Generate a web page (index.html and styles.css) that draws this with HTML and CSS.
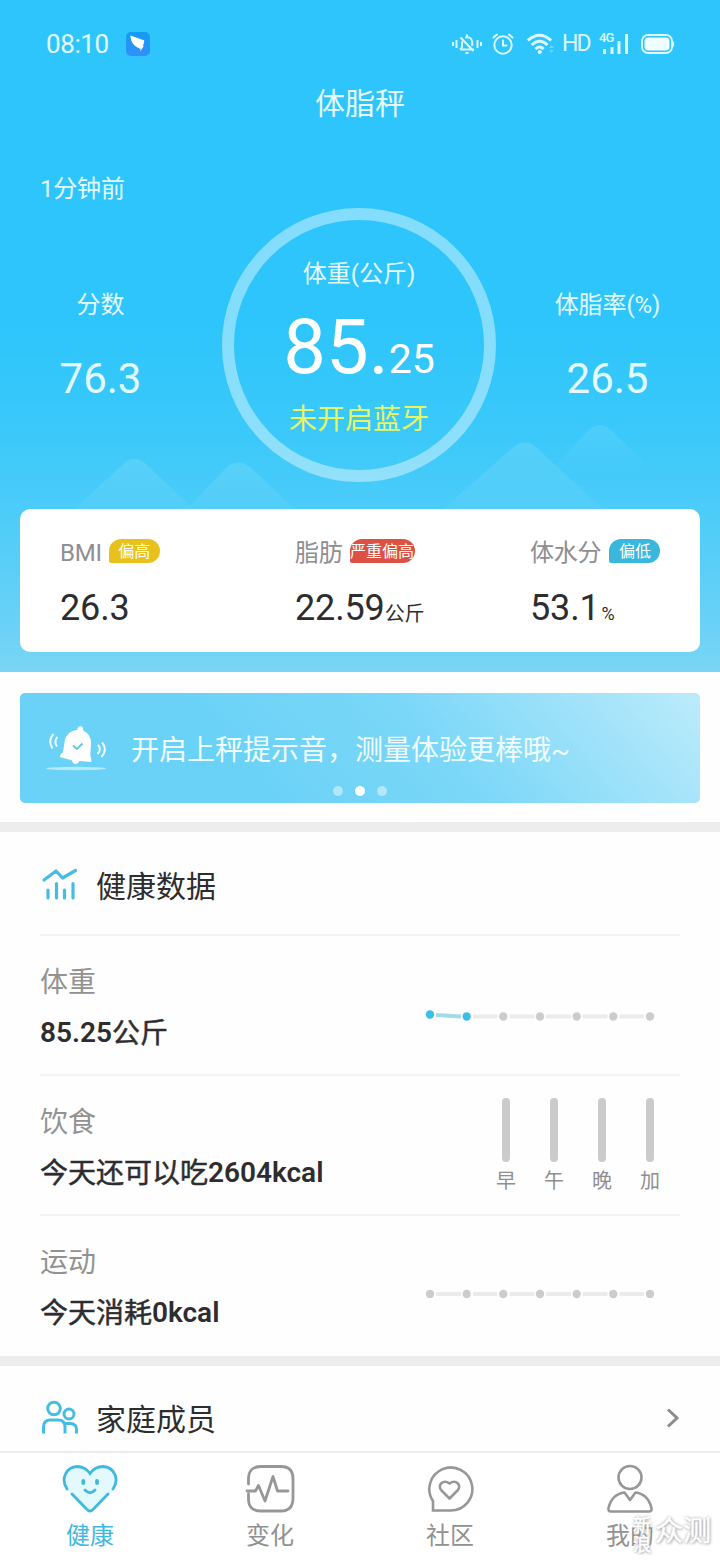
FILE: index.html
```html
<!DOCTYPE html>
<html lang="zh-CN">
<head>
<meta charset="utf-8">
<title>体脂秤</title>
<link rel="stylesheet" href="styles.css">
</head>
<body>
<div class="screen">
  <section class="hero">
    <svg class="hills" width="720" height="110" viewBox="0 0 720 110">
      <defs>
        <linearGradient id="hill" x1="0" y1="0" x2="0" y2="1">
          <stop offset="0" stop-color="#fff" stop-opacity=".12"/>
          <stop offset="1" stop-color="#fff" stop-opacity=".03"/>
        </linearGradient>
        <linearGradient id="hill-far" x1="0" y1="0" x2="0" y2="1">
          <stop offset="0" stop-color="#fff" stop-opacity=".1"/>
          <stop offset="1" stop-color="#fff" stop-opacity="0"/>
        </linearGradient>
      </defs>
      <path fill="url(#hill)" d="M72 92 L123 44 Q134 34 146 44 L190 86 L184 92Z"/>
      <path fill="url(#hill)" d="M184 92 L227 47 Q238 38 250 47 L298 92Z"/>
      <path fill="url(#hill)" d="M440 92 L509 31 Q523 15 537 28 L606 92Z"/>
      <path fill="url(#hill-far)" d="M556 45 L588 11 Q600 -1 612 11 L640 38 Q646 46 638 54 L566 54Z"/>
    </svg>
    <header class="status">
      <span class="clock">08:10</span>
      <svg class="app-badge" width="24" height="24" viewBox="0 0 24 24">
        <defs><linearGradient id="ding" x1="0" y1="0" x2="0" y2="1"><stop offset="0" stop-color="#149cf3"/><stop offset="1" stop-color="#338efb"/></linearGradient></defs>
        <rect width="24" height="24" rx="5" fill="url(#ding)"/>
        <path fill="#fff" d="M4.300 3.500 L18 8.300 Q18.600 9 18 10.500 L17 14 H17.700 L14 19.700 L14.600 17 L11.500 15.500 L8.500 13.500 L6.500 11 L5.200 8.500Z"/>
      </svg>
      <div class="indicators">
        <svg class="i-mute" width="30" height="22" viewBox="0 0 30 22" fill="none" stroke="#dcfaff" stroke-width="2">
          <path d="M1 9v4M4.500 7v8M25.500 7v8M29 9v4M8 16.500h14M8 16.500 L10 14V8.500M13 4.500 Q20 3 20.200 9.500 V13M15 1.500v2M13.500 20h3M8.500 4.500 L21.500 18"/>
        </svg>
        <svg class="i-alarm" width="22" height="22" viewBox="0 0 22 22" fill="none" stroke="#dcfaff" stroke-width="2" stroke-linecap="round">
          <circle cx="11" cy="12" r="8.700"/><path d="M11 7.500v5h3.500M1.500 4.500 L5 1.500M20.500 4.500 L17 1.500"/>
        </svg>
        <svg class="i-wifi" width="28" height="22" viewBox="0 0 28 22" fill="none" stroke="#dcfaff" stroke-width="2.900">
          <path d="M.8 7.500 Q12.500 -3 24.200 7.500M4.700 12 Q12.500 4.500 20.500 12M8.500 16 Q12.500 12 16.700 16"/>
          <circle cx="12.700" cy="19" r="2.100" fill="#dcfaff" stroke="none"/>
          <path stroke="none" fill="#65d8f4" d="M22 15l2.500-3 2.500 3zM22 17l2.500 3 2.500-3z"/>
        </svg>
        <span class="hd">HD</span>
        <span class="signal">
          <svg width="30" height="22" viewBox="0 0 30 22" fill="#dcfaff"><path d="M4 16h3v5H4zM11.500 14h3v7h-3zM18.500 8h3v13h-3zM26 1h3v20h-3z"/></svg>
          <span class="net">4G</span>
        </span>
        <svg class="i-battery" width="34" height="20" viewBox="0 0 34 20">
          <rect x="1" y="1" width="30" height="18" rx="6" fill="none" stroke="#dcfaff" stroke-width="1.800"/>
          <rect x="3.500" y="3.500" width="25" height="13" rx="4" fill="#f0feff"/>
          <path d="M31 5.500 Q35.500 10 31 14.500Z" fill="#dcfaff"/>
        </svg>
      </div>
    </header>
    <h1 class="title">体脂秤</h1>
    <p class="updated">1分钟前</p>
    <div class="overview">
      <div class="side side-left"><span class="side-label">分数</span><span class="side-value">76.3</span></div>
      <div class="ring">
        <span class="ring-label">体重(公斤)</span>
        <span class="ring-value">85.<small>25</small></span>
        <span class="ring-state">未开启蓝牙</span>
      </div>
      <div class="side side-right"><span class="side-label">体脂率(%)</span><span class="side-value">26.5</span></div>
    </div>
    <div class="metrics">
      <div class="metric"><div class="metric-head">BMI<span class="tag tag-high">偏高</span></div><div class="metric-value">26.3</div></div>
      <div class="metric"><div class="metric-head">脂肪<span class="tag tag-severe">严重偏高</span></div><div class="metric-value">22.59<small>公斤</small></div></div>
      <div class="metric"><div class="metric-head">体水分<span class="tag tag-low">偏低</span></div><div class="metric-value">53.1<small class="pct">%</small></div></div>
    </div>
  </section>

  <section class="banner">
    <svg class="bell" width="62" height="48" viewBox="0 0 62 48">
      <ellipse cx="30" cy="44.500" rx="30" ry="1.700" fill="#b5e9fc"/>
      <path fill="#fff" d="M31.300 6 Q31.500 2 34.500 2.200 Q37.600 2.400 37.300 6.800 Q45 10 45 19 L44.300 32 Q45.800 34.500 45.200 38 L33.500 37 Q32 40.300 29 39.900 Q26.200 39.500 26.300 36.500 L14 33 Q14 30 17 28.500 L18.700 17 Q20.500 7 31.300 6Z"/>
      <path d="M27 21.500 L31 25 L36.500 19.500" fill="none" stroke="#6fc5d8" stroke-width="2"/>
      <path d="M7.500 10 Q1.500 16.500 6.500 24.500M11.500 13 Q7.500 17.500 11 22.500M56 18.500 Q62 25 55.500 33M52 21 Q56 25.500 51.500 30" fill="none" stroke="#f1fdff" stroke-width="1.900"/>
    </svg>
    <p class="banner-text">开启上秤提示音，测量体验更棒哦~</p>
    <div class="dots"><i></i><i class="on"></i><i></i></div>
  </section>

  <section class="health">
    <h2 class="heading">
      <svg width="38" height="34" viewBox="0 0 38 34" fill="none" stroke="#45bde2" stroke-width="3.200" stroke-linecap="round" stroke-linejoin="round">
        <path d="M4 12 L16 3 L22.500 10 L35.500 2.500M8 22v8M16.500 15.500V30M24.500 22v8M33 15.500V30"/>
      </svg>健康数据</h2>
    <article class="row">
      <div><p class="row-label">体重</p><p class="row-value"><b>85.25</b>公斤</p></div>
      <svg class="trend" width="230" height="14" viewBox="0 0 230 14">
        <path d="M11 7 L36 8.400" stroke="#a2dbe8" stroke-width="4"/>
        <path d="M48 8.500H72.500M84.500 8.500H109.500M121 8.500H146M157.500 8.500H182.500M194.500 8.500H219" stroke="#ebebeb" stroke-width="4"/>
        <g fill="#3bbfe6"><circle cx="5" cy="6.500" r="4.200"/><circle cx="41.700" cy="8.500" r="4.200"/></g>
        <g fill="#ccc"><circle cx="78.300" cy="8.500" r="4.200"/><circle cx="115" cy="8.500" r="4.200"/><circle cx="151.700" cy="8.500" r="4.200"/><circle cx="188.300" cy="8.500" r="4.200"/><circle cx="225" cy="8.500" r="4.200"/></g>
      </svg>
    </article>
    <article class="row">
      <div><p class="row-label">饮食</p><p class="row-value">今天还可以吃<b>2604kcal</b></p></div>
      <div class="meals"><span>早</span><span>午</span><span>晚</span><span>加</span></div>
    </article>
    <article class="row">
      <div><p class="row-label">运动</p><p class="row-value">今天消耗<b>0kcal</b></p></div>
      <svg class="trend trend-flat" width="230" height="14" viewBox="0 0 230 14">
        <path d="M11 7H36M48 7H72.500M84.500 7H109.500M121 7H146M157.500 7H182.500M194.500 7H219" stroke="#ebebeb" stroke-width="4"/>
        <g fill="#ccc"><circle cx="5" cy="7" r="4.200"/><circle cx="41.700" cy="7" r="4.200"/><circle cx="78.300" cy="7" r="4.200"/><circle cx="115" cy="7" r="4.200"/><circle cx="151.700" cy="7" r="4.200"/><circle cx="188.300" cy="7" r="4.200"/><circle cx="225" cy="7" r="4.200"/></g>
      </svg>
    </article>
  </section>

  <section class="family">
    <h2 class="heading">
      <svg width="38" height="36" viewBox="0 0 38 36" fill="none" stroke="#45bde2" stroke-width="3">
        <circle cx="14" cy="8.500" r="6.300"/><circle cx="29" cy="14" r="5"/>
        <path d="M3.500 33.500V27 Q3.500 20 10.500 20H18 Q25 20 25 27V33.500M24 23.500H30 Q36.500 23.500 36.500 29.500V33.500"/>
      </svg>家庭成员</h2>
    <svg class="chevron" width="14" height="22" viewBox="0 0 14 22" fill="none" stroke="#8c8c8c" stroke-width="3"><path d="M2 2.500 L11 11 L2 19.500"/></svg>
  </section>

  <nav class="tabs">
    <a class="tab active">
      <svg width="56" height="50" viewBox="0 0 56 50" fill="none" stroke="#3fb9de" stroke-width="2.800" stroke-linecap="round">
        <path stroke="none" fill="#e4f9fe" d="M28 10 C18 -2 2 4 2 17 Q3 23 8 29 L23 44 Q28 49 33 44 L48 29 Q54 22 54 17 C53 3 38 -1 28 10Z"/>
        <path d="M5 25 C-2 14 5 3 15 2.500 Q23 2.500 28 9.500 Q33 2.500 41 2.500 C52 3 58 15 51 25M10 30 L24 44.500 Q28 49.500 32 44.500 L46 30M23 26 Q28 31.500 33 26"/>
        <path d="M21.300 17v2M35 17v2" stroke-width="3.800"/>
      </svg><span>健康</span></a>
    <a class="tab">
      <svg width="50" height="50" viewBox="0 0 50 50" fill="none" stroke="#979797" stroke-width="2.800" stroke-linecap="round" stroke-linejoin="round">
        <path d="M3.500 20V15 Q3.500 2.500 16 2.500H36 Q48 2.500 48 15V34 Q48 47 36 47H16 Q3.500 47 3.500 35V30M2 27H10.500 L13.500 21.500 L20 37 L28 12.500 L32.500 27H43"/>
      </svg><span>变化</span></a>
    <a class="tab">
      <svg width="50" height="50" viewBox="0 0 50 50" fill="none" stroke="#979797" stroke-width="2.600">
        <path d="M8 46.500V37 A21.500 21.500 0 1 1 25.500 46.500Z"/>
        <path d="M24.500 34.500 L16.500 26.500 C12 21 18 15 24.500 19.500 C31 15 37 21 32.500 26.500Z" stroke-linejoin="round"/>
      </svg><span>社区</span></a>
    <a class="tab">
      <svg width="50" height="50" viewBox="0 0 50 50" fill="none" stroke="#979797" stroke-width="2.600" stroke-linejoin="round">
        <circle cx="25" cy="13.500" r="11.500"/>
        <path d="M19.500 28.500 Q7 30 3.500 44 Q3 47.500 6 47.500H44 Q47 47.500 46.500 44 Q43 30 30.500 28.500 L25 36Z"/>
      </svg><span>我的</span></a>
  </nav>
  <div class="watermark"><span class="wm-small">新<br>浪</span><span class="wm-big">众测</span></div>
</div>
</body>
</html>
```
FILE: styles.css
```css
* { box-sizing: border-box; }
body { margin: 0; background: #fff; font-family: Roboto, "Noto Sans CJK SC", sans-serif; color: #2d2d2f; }
h1, h2, p { margin: 0; font-weight: 400; }
svg { display: block; flex: none; }
.screen { position: relative; width: 720px; height: 1560px; overflow: hidden; display: flex; flex-direction: column; background: #fefefe; }

.hero { position: relative; height: 672px; flex: none; padding: 0 20px; background: linear-gradient(#2dc5fb 0, #2dc5fb 320px, #3cc9fa 440px, #58cef8 560px, #79d4f5 672px); color: #e4fbff; }
.hills { position: absolute; left: 0; top: 420px; }
.status { position: relative; display: flex; align-items: center; height: 88px; padding: 0 26px; }
.clock { width: 80px; font: 26px/30px Roboto, sans-serif; letter-spacing: -0.4px; }
.indicators { margin-left: auto; display: flex; align-items: center; color: #dcfaff; }
.i-alarm { margin-left: 10px; }
.i-wifi { margin-left: 13px; }
.hd { width: 38px; margin-left: 6px; font: 23px/28px Roboto, sans-serif; letter-spacing: -1.8px; text-indent: 1px; }
.signal { position: relative; display: block; }
.net { position: absolute; left: 0; top: -2px; font: 500 13px/14px Roboto, sans-serif; letter-spacing: -1px; }
.i-battery { margin-left: 12px; margin-right: -1px; }
.title { position: relative; height: 32px; line-height: 32px; font-size: 30px; text-align: center; }
.updated { position: relative; height: 40px; margin-top: 48px; padding-left: 20px; font-size: 24px; line-height: 42px; letter-spacing: -0.2px; }
.overview { position: relative; display: flex; height: 301px; }
.side { display: flex; flex-direction: column; align-items: center; width: 161px; padding-top: 77px; }
.side-left { margin-right: 41px; }
.side-right { margin-left: 29px; width: 165px; }
.side-label { font-size: 24px; line-height: 40px; letter-spacing: -0.1px; }
.side-value { margin-top: 29px; font-size: 42px; line-height: 50px; }
.ring { display: flex; flex-direction: column; align-items: center; flex: none; width: 274px; height: 274px; border: 12px solid rgba(255,255,255,.42); border-radius: 50%; padding-top: 34px; }
.ring-label { font-size: 24px; line-height: 40px; }
.ring-value { height: 84px; margin-top: 8px; font-size: 76px; line-height: 90px; color: #fff; white-space: nowrap; }
.ring-value small { font-size: 41px; }
.ring-state { margin-top: 14px; font-size: 28px; line-height: 40px; color: #e6f765; }
.metrics { position: relative; display: flex; width: 680px; height: 143px; padding: 25px 0 0 40px; border-radius: 10px; background: #fff; }
.metric { width: 235px; flex: none; color: #8e8e93; }
.metric-head { display: flex; align-items: center; height: 38px; font-size: 24px; line-height: 38px; letter-spacing: -0.2px; }
.tag { display: flex; align-items: center; justify-content: center; height: 24px; width: 51px; margin-left: 7px; margin-top: -4px; border-radius: 12px 12px 12px 2px; color: #fff; font-size: 16px; line-height: 26px; padding-top: 2px; letter-spacing: 0; white-space: nowrap; overflow: hidden; }
.tag-high { background: #e9c11d; }
.tag-severe { width: 65px; margin-left: 7px; background: #dd5145; }
.tag-low { margin-left: 8px; background: #39b7dd; }
.metric-value { margin-top: 15px; font-size: 36px; line-height: 42px; color: #2d2d2f; white-space: nowrap; letter-spacing: -0.15px; }
.metric-value small { font-size: 20px; position: relative; top: 1px; }
.metric-value .pct { margin-left: 2px; font-size: 18px; top: 0; }

.banner { position: relative; display: flex; flex: none; align-items: center; width: 680px; height: 110px; margin: 21px 20px 19px; padding: 0 0 0 26px; border-radius: 5px; background: linear-gradient(50deg, #6ad2f7 32%, #7bd7f8 60%, #bcebfb 100%); }
.bell { margin-right: 23px; }
.banner-text { font-size: 28px; line-height: 40px; color: #f1fdff; white-space: nowrap; padding-top: 6px; }
.dots { position: absolute; left: 313px; bottom: 7px; display: flex; gap: 12px; }
.dots i { width: 10px; height: 10px; border-radius: 50%; background: #b2e7fb; }
.dots .on { background: #fff; }

.health { flex: none; height: 534px; padding: 0 40px; border-top: 10px solid #ededed; }
.heading { display: flex; align-items: center; gap: 18px; font-size: 30px; line-height: 44px; }
.heading svg { margin-bottom: 4px; }
.health .heading { height: 102px; padding-top: 7px; }
.row { display: flex; justify-content: space-between; height: 140px; border-top: 2px solid #f3f3f3; padding-top: 24px; }
.row-label { margin-top: 3px; font-size: 28px; line-height: 40px; color: #929292; }
.row-value { margin-top: 11px; font-size: 28px; line-height: 40px; -webkit-text-stroke: 0.5px currentColor; }
.row-value b { position: relative; top: -1px; font-weight: 600; -webkit-text-stroke: 0; }
.trend { margin: 48px 25px 0 0; }
.trend-flat { margin-top: 47px; }
.meals { display: flex; gap: 24px; margin: -2px 18px 0 0; }
.meals span { width: 24px; text-align: center; font-size: 20px; line-height: 34px; color: #8f8f8f; }
.meals span::before { content: ""; display: block; width: 8px; height: 64px; margin: 0 auto 2px; border-radius: 4px; background: #cbcbcb; }

.family { display: flex; flex: none; justify-content: space-between; align-items: center; height: 95px; padding: 0 40px; border-top: 10px solid #ededed; }
.family .heading { height: 85px; padding-top: 23px; }
.chevron { margin-top: 19px; }
.tabs { display: flex; flex: none; height: 109px; border-top: 2px solid #ededed; background: #fff; }
.tab { display: flex; flex-direction: column; align-items: center; width: 180px; padding-top: 11px; font-size: 24px; line-height: 40px; color: #919191; }
.tab.active { color: #3fb9de; }
.tab span { margin-top: 2px; }
.watermark { position: absolute; right: 9px; bottom: 7px; display: flex; align-items: center; gap: 4px; color: #fff; font-family: "Noto Sans CJK SC", sans-serif; text-shadow: 0 0 3px #999, 1px 1px 3px #aaa; -webkit-text-stroke: 0.5px #fff; }
.wm-small { font-size: 18px; line-height: 19px; }
.wm-big { position: relative; top: -5px; font-size: 28px; line-height: 38px; }
```
